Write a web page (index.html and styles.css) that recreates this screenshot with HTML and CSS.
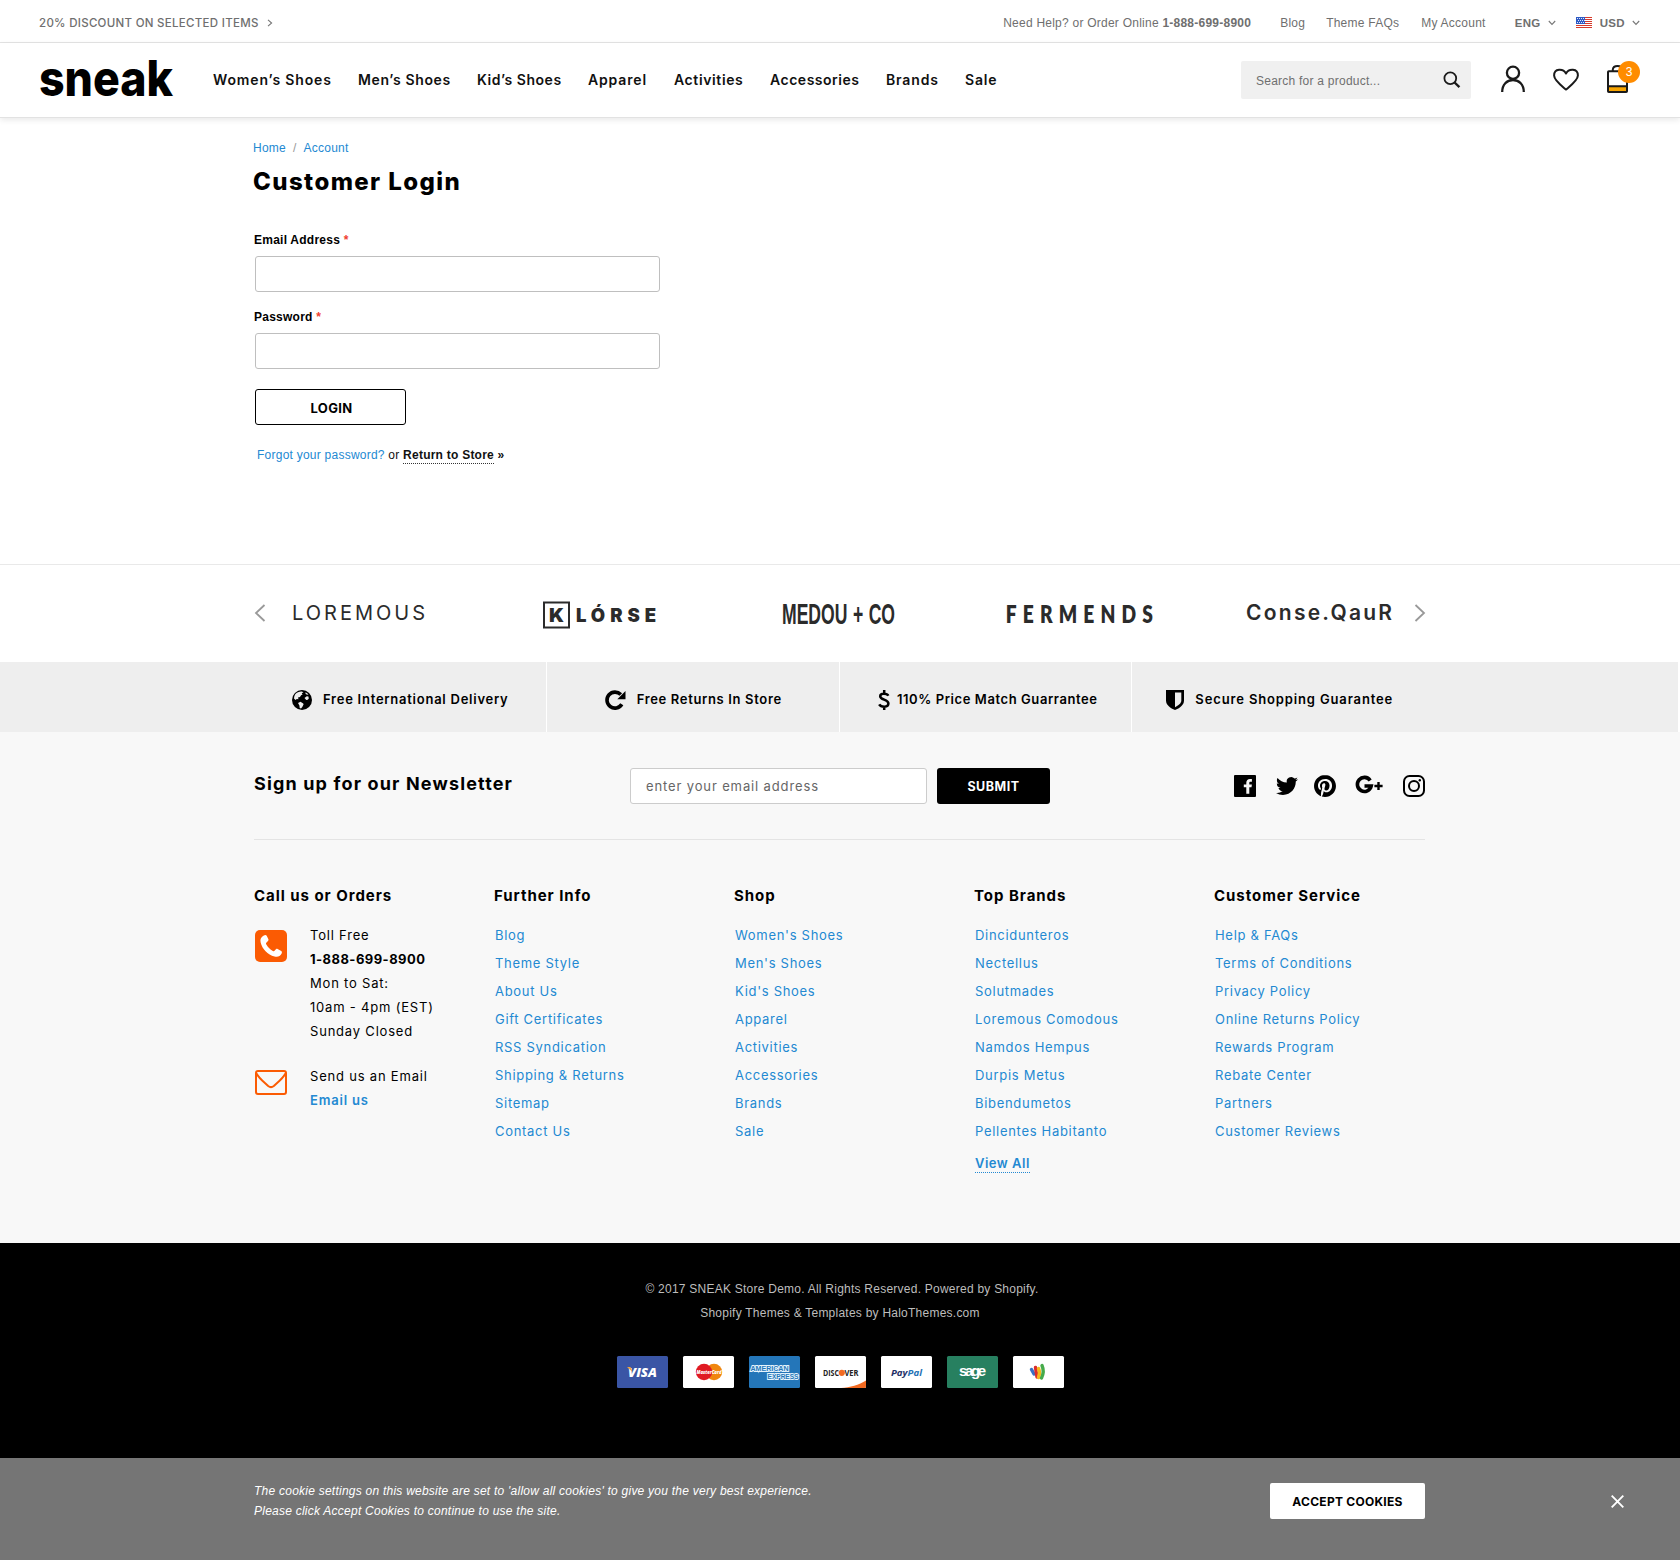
FILE: index.html
```html
<!DOCTYPE html>
<html lang="en">
<head>
<meta charset="utf-8">
<title>Customer Login – Sneak</title>
<link rel="stylesheet" href="styles.css">
</head>
<body>
<div class="topbar">
  <a class="promo">20% DISCOUNT ON SELECTED ITEMS
    <svg width="6" height="8" viewBox="0 0 6 8"><path d="M1 .8 4.6 4 1 7.2" fill="none" stroke="#777" stroke-width="1.1"/></svg>
  </a>
  <div class="topnav">
    <span class="help">Need Help? or Order Online <b>1-888-699-8900</b></span>
    <a class="t-blog">Blog</a>
    <a class="t-faq">Theme FAQs</a>
    <a class="t-acc">My Account</a>
    <span class="pick">ENG <svg width="8" height="6" viewBox="0 0 8 6"><path d="M.8 1 4 4.4 7.2 1" fill="none" stroke="#777" stroke-width="1.1"/></svg></span>
    <svg class="flag" width="16" height="11" viewBox="0 0 16 11">
      <rect width="16" height="11" fill="#fff"/>
      <path d="M0 .5h16M0 2.5h16M0 4.5h16M0 6.5h16M0 8.5h16M0 10.5h16" stroke="#d63a2c"/>
      <rect width="9" height="7" fill="#2f5bc4"/>
      <path d="M1 1.5h8M2 3.5h7M1 5.5h8" stroke="#dfe7fb" stroke-dasharray="1 1"/>
    </svg>
    <span class="pick">USD <svg width="8" height="6" viewBox="0 0 8 6"><path d="M.8 1 4 4.4 7.2 1" fill="none" stroke="#777" stroke-width="1.1"/></svg></span>
  </div>
</div>

<header class="header">
  <svg class="logo" width="136" height="74" viewBox="0 0 136 74"><text x="0" y="53" textLength="134" lengthAdjust="spacingAndGlyphs">sneak</text></svg>
  <nav class="nav">
    <a>Women’s Shoes</a><a>Men’s Shoes</a><a>Kid’s Shoes</a><a>Apparel</a><a>Activities</a><a>Accessories</a><a>Brands</a><a>Sale</a>
  </nav>
  <div class="search">
    <span>Search for a product...</span>
    <svg width="18" height="18" viewBox="0 0 18 18" fill="none" stroke="#1a1a1a"><circle cx="7.3" cy="7.2" r="5.9" stroke-width="1.8"/><path d="m11.6 11.5 4.8 4.7" stroke-width="2.4"/></svg>
  </div>
  <svg class="ico" width="24" height="38" viewBox="0 0 24 38" fill="none" stroke="#1a1a1a" stroke-width="2.3"><circle cx="12" cy="11.8" r="6.1"/><path d="M1.2 31c0-7.4 4.6-12 10.8-12s10.8 4.6 10.8 12"/></svg>
  <svg class="ico ico-gap" width="26" height="38" viewBox="0 0 26 38" fill="none" stroke="#1a1a1a" stroke-width="2"><path d="M13 28.6C8 24.300 1.100 19.200 1.100 14.500 1.100 6.900 10.300 7.200 13 12.500 15.700 7.200 24.900 6.900 24.900 14.500 24.900 19.200 18 24.300 13 28.600Z" stroke-linejoin="round"/></svg>
  <div class="bag ico-gap">
    <svg width="21" height="38" viewBox="0 0 21 38" fill="none" stroke="#1a1a1a" stroke-width="2"><rect x="1" y="26" width="19" height="5" fill="#f7a400" stroke="none"/><rect x="1" y="10.300" width="19" height="20.700" rx=".8"/><path d="M1 25.300h19M5.800 10V8.500C6.300 3.800 14.700 3.800 15.200 8.500V10"/></svg>
    <span class="badge">3</span>
  </div>
</header>

<main class="main wrap">
  <p class="crumbs"><a>Home</a><i>/</i><a>Account</a></p>
  <h1>Customer Login</h1>
  <form class="login">
    <label>Email Address <em>*</em></label>
    <div class="field"></div>
    <label>Password <em>*</em></label>
    <div class="field"></div>
    <div class="btn-login">LOGIN</div>
    <p class="forgot"><a>Forgot your password?</a> or <b><u>Return to Store</u> »</b></p>
  </form>
</main>

<section class="brands">
  <div class="brand-row">
    <svg class="arrow prev" width="12" height="18" viewBox="0 0 12 18"><path d="M10.500 1 2 9l8.500 8" fill="none" stroke="#999" stroke-width="1.800"/></svg>
    <svg width="136" height="60" viewBox="0 0 136 60" class="b-light"><text x="0" y="36" textLength="133" lengthAdjust="spacing">LOREMOUS</text></svg>
    <svg width="116" height="60" viewBox="0 0 116 60" class="b-black"><rect x="2" y="18.500" width="25" height="25" fill="none" stroke="#2b2b2b" stroke-width="2"/><text x="7" y="38" font-size="19" textLength="15" lengthAdjust="spacingAndGlyphs">K</text><text x="34" y="38" font-size="18.500" textLength="80" lengthAdjust="spacing">LÓRSE</text></svg>
    <svg width="116" height="60" viewBox="0 0 116 60" class="b-cond"><text x="0" y="40" textLength="113" lengthAdjust="spacingAndGlyphs">MEDOU + CO</text></svg>
    <svg width="150" height="60" viewBox="0 0 150 60" class="b-bold"><text transform="scale(.8 1)" x="1" y="39" textLength="184" lengthAdjust="spacing">FERMENDS</text></svg>
    <svg width="150" height="60" viewBox="0 0 150 60" class="b-semi"><text x="1" y="35.500" textLength="146" lengthAdjust="spacing">Conse.QauR</text></svg>
    <svg class="arrow next" width="12" height="18" viewBox="0 0 12 18"><path d="M1.500 1 10 9l-8.500 8" fill="none" stroke="#999" stroke-width="1.800"/></svg>
  </div>
</section>

<section class="services">
  <div class="service-row">
    <div class="delivery"><svg width="20" height="20" viewBox="0 0 20 20"><circle cx="10" cy="10" r="10"/><path fill="#eee" d="M3.200 4.200C5 2.200 7.500 1.300 9.800 1.500l1.700.8-1.800.9.900 1.200-1.500.8-1.100 1.700-2 .7.500 1.600-1.700-.3-1.300 1.200L2 8.600c0-1.600.400-3.100 1.200-4.400ZM13.500 2.300l3 2-1.200.5-1.700-.8ZM6 13l2.500-1.300 2.700 1.700.4.800-1.300 2.700-1.300 1.600-1.300-.4-.3-2.700ZM12.500 8l2.300-1.700 1.600.2.400 2-1 1.200-1.600.4-.8-1Z"/></svg><span>Free International Delivery</span></div>
    <div class="returns"><svg width="21" height="20" viewBox="0 0 21 20"><path d="M16.800 14.300A8 8 0 1 1 15.800 4.600" fill="none" stroke="#000" stroke-width="3.600"/><path d="M20.500 1v8.200h-8.200Z"/></svg><span>Free Returns In Store</span></div>
    <div class="tight"><svg width="12" height="20" viewBox="0 0 12 20" fill="none" stroke="#000" stroke-width="2.500"><path d="M10.300 5.800C9.200 3.400 2.300 2.700 2.200 6.200c-.1 4 8.200 3 8.200 7.400 0 4.200-7.400 3.900-9.200.7M6.200 0v3.500M6.200 16.500V20"/></svg><span>110% Price Match Guarrantee</span></div>
    <div class="secure"><svg width="18" height="20" viewBox="0 0 18 20"><path d="M0 0h18v10.500c0 4.500-4.500 7.700-9 9.500-4.500-1.800-9-5-9-9.500Z"/><path fill="#eee" d="M9 2.500h6.300v8c0 2.800-3 5.100-6.300 6.700Z"/></svg><span>Secure Shopping Guarantee</span></div>
  </div>
</section>

<footer class="footer">
  <div class="wrap">
    <div class="news">
      <h2>Sign up for our Newsletter</h2>
      <div class="news-input">enter your email address</div>
      <div class="btn-submit">SUBMIT</div>
      <div class="social">
        <svg width="22" height="22" viewBox="0 0 22 22"><path d="M1 0h20a1 1 0 0 1 1 1v20a1 1 0 0 1-1 1H1a1 1 0 0 1-1-1V1a1 1 0 0 1 1-1Z"/><path fill="#f8f8f8" d="M12.300 18.800v-6.500h-2.500V9.500h2.500V7.700c0-2.400 1.500-3.800 3.700-3.800.800 0 1.400.1 1.900.2v2.600h-1.300c-1 0-1.300.5-1.300 1.300v1.500h2.600l-.4 2.800h-2.200v6.500Z"/></svg>
        <svg class="tw" width="22" height="22" viewBox="0 0 24 24"><path d="M23.953 4.570a10 10 0 01-2.825.775 4.958 4.958 0 002.163-2.723c-.951.555-2.005.959-3.127 1.184a4.920 4.920 0 00-8.384 4.482C7.690 8.095 4.067 6.130 1.640 3.162a4.822 4.822 0 00-.666 2.475c0 1.710.870 3.213 2.188 4.096a4.904 4.904 0 01-2.228-.616v.060a4.923 4.923 0 003.946 4.827 4.996 4.996 0 01-2.212.085 4.936 4.936 0 004.604 3.417 9.867 9.867 0 01-6.102 2.105c-.390 0-.779-.023-1.170-.067a13.995 13.995 0 007.557 2.209c9.053 0 13.998-7.496 13.998-13.985 0-.210 0-.420-.015-.630A9.935 9.935 0 0024 4.590z"/></svg>
        <svg class="pin" width="22" height="22" viewBox="0 0 24 24"><path d="M12.017 0C5.396 0 .029 5.367.029 11.987c0 5.079 3.158 9.417 7.618 11.162-.105-.949-.199-2.403.041-3.439.219-.937 1.406-5.957 1.406-5.957s-.359-.720-.359-1.781c0-1.663.967-2.911 2.168-2.911 1.024 0 1.518.769 1.518 1.688 0 1.029-.653 2.567-.992 3.992-.285 1.193.600 2.165 1.775 2.165 2.128 0 3.768-2.245 3.768-5.487 0-2.861-2.063-4.869-5.008-4.869-3.410 0-5.409 2.562-5.409 5.199 0 1.033.394 2.143.889 2.741.099.120.112.225.085.345-.090.375-.293 1.199-.334 1.363-.053.225-.172.271-.401.165-1.495-.690-2.433-2.878-2.433-4.646 0-3.776 2.748-7.252 7.920-7.252 4.158 0 7.392 2.967 7.392 6.923 0 4.135-2.607 7.462-6.233 7.462-1.214 0-2.354-.629-2.758-1.379l-.749 2.848c-.269 1.045-1.004 2.352-1.498 3.146 1.123.345 2.306.535 3.550.535 6.607 0 11.985-5.365 11.985-11.987C23.970 5.390 18.592.026 11.985.026L12.017 0z"/></svg>
        <svg class="gp" width="28" height="22" viewBox="0 0 28 22"><path d="M15.200 5.500A7 7 0 1 0 16.200 11H9.500" fill="none" stroke="#000" stroke-width="3.600"/><path d="M23.500 6.900v8.200M19.400 11h8.200" stroke="#000" stroke-width="2.400"/></svg>
        <svg class="ig" width="22" height="22" viewBox="0 0 22 22" fill="none" stroke="#000" stroke-width="2"><rect x="1" y="1" width="20" height="20" rx="5.500"/><circle cx="11" cy="11" r="5"/><circle cx="16.800" cy="5.200" r="1.200" fill="#000" stroke="none"/></svg>
      </div>
    </div>
    <div class="cols">
      <div>
        <h3>Call us or Orders</h3>
        <div class="contact">
          <svg width="32" height="32" viewBox="0 0 32 32"><rect width="32" height="32" rx="5" fill="#fb5b03"/><path fill="#fff" d="M8.800 5.400c1.300-.8 2.300-.7 2.900.4l1.700 3.500c.4 1-.1 1.600-1.600 2.900-1 .8-1 1.500-.3 2.600 1.700 2.800 3.600 4.700 6.300 6.200.8.400 1.400.3 2-.5 1.200-1.500 1.800-2 2.800-1.500l3.600 2c.9.500.9 1.500.3 2.800-1.300 2.600-3.900 3.600-7 2.700C12.700 24.600 7.200 19.200 5.600 12.200c-.7-3.100.6-5.600 3.200-6.800Z"/></svg>
          <p>Toll Free<br><b>1-888-699-8900</b><br>Mon to Sat:<br>10am - 4pm (EST)<br>Sunday Closed</p>
        </div>
        <div class="contact mail">
          <svg width="32" height="25" viewBox="0 0 32 25" fill="none" stroke="#fb5b03" stroke-width="2"><rect x="1" y="1" width="30" height="23" rx="2"/><path d="M1.500 3.500c3 5.500 8 9 11.700 12.500 2.100 1.700 3.500 1.700 5.600 0C22.500 12.500 27.500 9 30.500 3.500" /></svg>
          <p>Send us an Email<br><a>Email us</a></p>
        </div>
      </div>
      <div><h3>Further Info</h3><ul><li>Blog</li><li>Theme Style</li><li>About Us</li><li>Gift Certificates</li><li>RSS Syndication</li><li>Shipping &amp; Returns</li><li>Sitemap</li><li>Contact Us</li></ul></div>
      <div><h3>Shop</h3><ul><li>Women's Shoes</li><li>Men's Shoes</li><li>Kid's Shoes</li><li>Apparel</li><li>Activities</li><li>Accessories</li><li>Brands</li><li>Sale</li></ul></div>
      <div><h3>Top Brands</h3><ul><li>Dincidunteros</li><li>Nectellus</li><li>Solutmades</li><li>Loremous Comodous</li><li>Namdos Hempus</li><li>Durpis Metus</li><li>Bibendumetos</li><li>Pellentes Habitanto</li><li class="all"><a>View All</a></li></ul></div>
      <div><h3>Customer Service</h3><ul><li>Help &amp; FAQs</li><li>Terms of Conditions</li><li>Privacy Policy</li><li>Online Returns Policy</li><li>Rewards Program</li><li>Rebate Center</li><li>Partners</li><li>Customer Reviews</li></ul></div>
    </div>
  </div>
</footer>

<section class="legal">
  <p class="copy">© 2017 SNEAK Store Demo. All Rights Reserved. Powered by Shopify.</p>
  <p>Shopify Themes &amp; Templates by HaloThemes.com</p>
  <div class="cards">
    <svg class="card" viewBox="0 0 51 32"><rect width="51" height="32" rx="1.500" fill="#3a55a5"/><text x="11" y="21" font-size="13" font-style="italic" fill="#fff" textLength="29" lengthAdjust="spacingAndGlyphs">VISA</text><path d="M10 11h3.500l2 5Z" fill="#f2a33a"/></svg>
    <svg class="card" viewBox="0 0 51 32"><rect width="51" height="32" rx="1.500" fill="#fff"/><circle cx="31" cy="16" r="8.200" fill="#f0860e"/><circle cx="21" cy="16" r="8.200" fill="#e01a22"/><text x="13.500" y="18" font-size="5.500" font-style="italic" fill="#fff" textLength="25" lengthAdjust="spacingAndGlyphs">MasterCard</text></svg>
    <svg class="card amex" viewBox="0 0 51 32"><rect width="51" height="32" rx="1.500" fill="#2476b9"/><g fill="#2476b9" stroke="#e6f3fc" stroke-width="2" paint-order="stroke" font-size="7.500"><text x="1.500" y="14.800" textLength="38" lengthAdjust="spacingAndGlyphs">AMERICAN</text><text x="18.500" y="22.800" textLength="31" lengthAdjust="spacingAndGlyphs">EXPRESS</text></g></svg>
    <svg class="card" viewBox="0 0 51 32"><rect width="51" height="32" rx="1.500" fill="#fff"/><path d="M26 32c9-.5 18-3 25-7.500V30.500A1.500 1.500 0 0 1 49.500 32Z" fill="#f26a21"/><text class="w700" x="8" y="20" font-size="9" fill="#222" textLength="16" lengthAdjust="spacingAndGlyphs">DISC</text><circle cx="26.800" cy="16.800" r="3.100" fill="#f26a21"/><text class="w700" x="29.500" y="20" font-size="9" fill="#222" textLength="14" lengthAdjust="spacingAndGlyphs">VER</text></svg>
    <svg class="card" viewBox="0 0 51 32"><rect width="51" height="32" rx="1.500" fill="#fff"/><text class="w700" x="10" y="19.500" font-size="9.500" font-style="italic" fill="#1f2f66" textLength="31" lengthAdjust="spacingAndGlyphs">Pay<tspan fill="#2471b5">Pal</tspan></text></svg>
    <svg class="card sage" viewBox="0 0 51 32"><rect width="51" height="32" rx="1.500" fill="#278060"/><text x="12" y="19.500" font-size="15" fill="#fff" textLength="27" lengthAdjust="spacing">sage</text></svg>
    <svg class="card" viewBox="0 0 51 32"><rect width="51" height="32" rx="1.500" fill="#fff"/><g fill="none" stroke-width="3.400" stroke-linecap="round"><path d="M18.500 13.500 21 18" stroke="#3a6fc4"/><path d="m22.500 11.500 1.500 9.500" stroke="#dc2c2c"/><path d="M25.500 12.500c1.200 2.500 1.200 6 0 9" stroke="#f5b81c"/><path d="M29 9.500c1.500 3.500 1.500 8.500-.5 12.500" stroke="#46ab4b"/></g></svg>
  </div>
</section>

<section class="cookie">
  <p>The cookie settings on this website are set to 'allow all cookies' to give you the very best experience.<br>Please click Accept Cookies to continue to use the site.</p>
  <div class="btn-accept">ACCEPT COOKIES</div>
  <svg class="close" width="13" height="13" viewBox="0 0 13 13"><path d="m.7.7 11.600 11.600M12.300.7.7 12.300" stroke="#fff" stroke-width="1.900"/></svg>
</section>
</body>
</html>
```

FILE: styles.css
```css
* { box-sizing: border-box; margin: 0; padding: 0; }
body {
  background: #fff;
  color: #000;
  font: 12px/20px "Liberation Sans", Arial, sans-serif;
  letter-spacing: .24px;
  width: 1680px;
}
svg { display: block; flex: none; overflow: visible; }
ul { list-style: none; }
.wrap { width: 1172px; margin: 0 auto; }

/* top bar */
.topbar {
  display: flex; justify-content: space-between; align-items: center;
  height: 43px; padding: 3px 40px 0 39px;
  border-bottom: 1px solid #e4e4e4;
  color: #6f6f6f; white-space: nowrap;
}
.promo { display: flex; align-items: center; gap: 8px; font: 500 11.5px/20px Inter, sans-serif; letter-spacing: .29px; }
.topnav { display: flex; align-items: center; }
.t-blog { margin-left: 29px; }
.t-faq { margin-left: 21px; }
.t-acc { margin-left: 22px; margin-right: 29px; }
.pick { display: flex; align-items: center; gap: 7px; font-weight: bold; font-size: 11.5px; letter-spacing: .35px; }
.flag { margin: 0 8px 0 20px; }

/* header */
.header {
  display: flex; align-items: center;
  height: 75px; padding: 0 52px 0 39px;
  border-bottom: 1px solid #e2e2e2;
  box-shadow: 0 2px 6px rgba(0,0,0,.09);
}
.logo text { font: 800 50px Inter, sans-serif; letter-spacing: 0; }
.nav {
  display: grid; grid-template-columns: 145px 119px 111px 86px 96px 116px 79px auto;
  margin-left: 38px;
  font: 600 14px/20px Inter, sans-serif; letter-spacing: .85px; color: #111; white-space: nowrap;
}
.nav a:nth-child(2), .nav a:nth-child(5) { letter-spacing: .62px; }
.nav a:nth-child(3), .nav a:nth-child(6) { letter-spacing: .52px; }
.search {
  display: flex; align-items: center; justify-content: space-between;
  width: 230px; height: 38px; margin-left: auto; margin-right: 30px; padding: 0 10px 0 15px;
  background: #f0f0f0; border-radius: 2px; color: #6f6f6f;
}
.search span { padding-top: 2px; }
.ico-gap { margin-left: 28px; }
.bag { position: relative; }
.badge {
  position: absolute; left: 11px; top: 0; width: 22px; height: 22px;
  background: #ff8c00; border-radius: 50%; color: #fff; text-align: center; line-height: 22px; letter-spacing: 0;
}

/* login */
.main { height: 446px; padding-top: 20px; }
.crumbs { margin-left: -1px; color: #2389d2; }
.crumbs i { font-style: normal; color: #999; margin: 0 7px; }
h1 { margin: 9px 0 0 -1px; font: 800 24px/30px Inter, sans-serif; letter-spacing: 1.4px; }
.login { padding-top: 35px; }
label { display: block; font-weight: bold; line-height: 16px; }
label em { color: #f0402f; font-style: normal; }
.field { width: 405px; height: 36px; margin: 8px 0 17px 1px; border: 1px solid #bfbfbf; border-radius: 3px; }
.btn-login {
  width: 151px; height: 36px; margin: 20px 0 20px 1px; padding-left: 2px; border: 1px solid #000; border-radius: 3px;
  font: 700 13px/37px Inter, sans-serif; letter-spacing: .3px; text-align: center;
}
.forgot { margin-left: 3px; color: #111; }
.forgot a { color: #2389d2; }
.forgot u { text-decoration: none; display: inline-block; line-height: 16px; border-bottom: 1px dotted #333; }

/* brand carousel */
.brands { height: 98px; border-top: 1px solid #e9e9e9; }
.brand-row {
  position: relative; width: 1200px; height: 97px; margin: 0 auto;
  display: grid; grid-template-columns: repeat(5, 240px); align-items: center; justify-items: center;
}
.brand-row text { fill: #2b2b2b; letter-spacing: 0; }
.b-light text { font: 400 20px Inter, sans-serif; }
.b-black text { font-family: Inter, sans-serif; font-weight: 900; }
.b-cond text { font: 700 30px "Liberation Sans", sans-serif; word-spacing: 1px; }
.b-bold text { font: 800 24px Lato, sans-serif; }
.b-semi text { font: 600 21px Inter, sans-serif; }
.arrow { position: absolute; top: 39px; }
.prev { left: 14px; }
.next { right: 14px; }

/* service promises */
.services { height: 70px; width: 1678px; background: #eee; }
.service-row { display: grid; grid-template-columns: repeat(4, 292.5px); width: 1170px; height: 70px; margin-left: 253.5px; }
.service-row > div {
  display: flex; align-items: center; justify-content: center; gap: 11px; padding-top: 5px;
  font: 600 13px/20px Inter, sans-serif; letter-spacing: .75px; white-space: nowrap;
}
.service-row span { margin-top: -2px; }
.service-row > div + div { border-left: 1px solid #fff; }
.service-row .delivery { padding-left: 1px; }
.service-row .returns { letter-spacing: .66px; padding-left: 1px; }
.service-row .tight { gap: 7px; letter-spacing: .58px; padding-left: 5px; }
.service-row .secure { letter-spacing: .86px; padding-left: 4px; }

/* footer */
.footer { height: 511px; background: #f8f8f8; }
.news { display: flex; align-items: center; width: 1171px; padding: 36px 0 35px; border-bottom: 1px solid #e4e4e4; }
.news h2 { width: 376px; margin-top: -5px; font: 700 18px/24px Inter, sans-serif; letter-spacing: 1.15px; white-space: nowrap; }
.news-input {
  width: 297px; height: 36px; padding-left: 15px; margin-right: 10px; background: #fff;
  border: 1px solid #ccc; border-radius: 3px; font: 13px/35px Inter, sans-serif; letter-spacing: .87px; color: #666;
}
.btn-submit {
  width: 113px; height: 36px; background: #000; border-radius: 3px; color: #fff;
  font: 700 12.5px/37px Inter, sans-serif; letter-spacing: .5px; text-align: center;
}
.social { display: flex; align-items: center; margin-left: auto; }
.tw { margin-left: 20px; }
.pin { margin-left: 16px; }
.gp { margin-left: 19px; }
.ig { margin-left: 20px; }
.cols { display: grid; grid-template-columns: repeat(5, 240px); padding-top: 46px; }
h3 { font: 700 15px/20px Inter, sans-serif; letter-spacing: .96px; margin-bottom: 15px; white-space: nowrap; }
.cols ul, .contact { font: 400 13px/28px Inter, sans-serif; letter-spacing: .7px; }
.cols ul { padding-left: 1px; color: #2389d2; white-space: nowrap; }
.all { padding-top: 4px; font-weight: 600; letter-spacing: .5px; }
.all a { display: inline-block; line-height: 18px; border-bottom: 1px dotted #2389d2; }
.contact { display: flex; gap: 23px; line-height: 24px; letter-spacing: .8px; margin: 17px 0 0 1px; white-space: nowrap; }
.contact svg { margin-top: 7px; }
.contact b { letter-spacing: .46px; }
.contact a { color: #2389d2; font-weight: 600; }
.mail { margin-top: 21px; }
.mail svg { margin-top: 6px; }

/* legal */
.legal { height: 215px; padding-top: 34px; background: #000; color: #bdbdbd; text-align: center; }
.legal p { line-height: 24px; }
.legal .copy { padding-left: 4px; }
.cards { display: flex; justify-content: center; gap: 15px; margin-top: 31px; }
.card { width: 51px; height: 32px; }
.card text { font-family: "Open Sans", sans-serif; font-weight: 800; letter-spacing: 0; }
.card .w700 { font-weight: 700; }
.amex text { font-family: "Liberation Sans", sans-serif; font-weight: 700; }
.sage text { font-family: "Liberation Sans", sans-serif; font-weight: 700; }

/* cookie bar */
.cookie { display: flex; align-items: flex-start; height: 102px; padding: 23px 56px 0 254px; background: #757575; color: #fff; }
.cookie p { font-style: italic; }
.btn-accept {
  width: 155px; height: 36px; margin: 2px 0 0 auto; background: #fff; border-radius: 2px; color: #000;
  font: 700 12px/37px Inter, sans-serif; letter-spacing: .26px; text-align: center;
}
.close { margin: 14px 0 0 186px; }
```
